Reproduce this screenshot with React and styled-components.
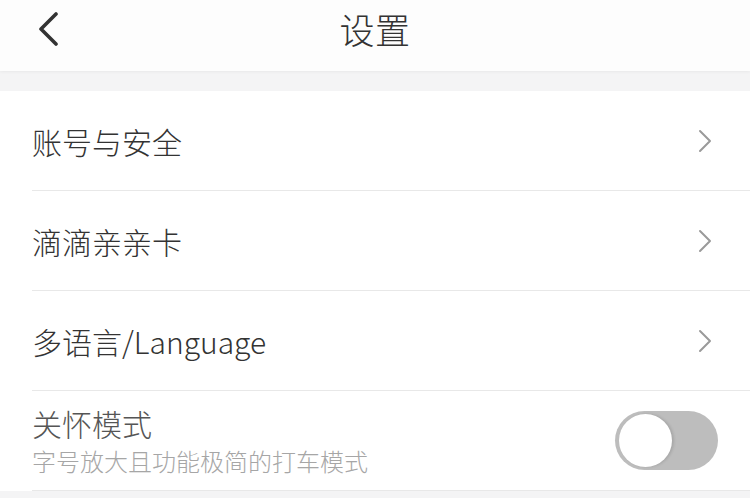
import React, { useState } from 'react';
import styled, { createGlobalStyle } from 'styled-components';

const GlobalStyle = createGlobalStyle`
  html, body {
    margin: 0;
    padding: 0;
    background: #f4f4f5;
  }
  body {
    font-family: "Noto Sans CJK SC", "Noto Sans", sans-serif;
    color: #333;
  }
`;

const items = [
  { id: 'account', title: '账号与安全' },
  { id: 'card', title: '滴滴亲亲卡' },
  { id: 'lang', title: '多语言/Language' },
];

function App() {
  const [care, setCare] = useState(false);

  return (
    <Page>
      <GlobalStyle />
      <Header>
        <BackButton aria-label="back">
          <svg width="22" height="34" viewBox="0 0 22 34">
            <path d="M19 2 L4 17 L19 32" fill="none" stroke="#333" strokeWidth="3.6" strokeLinecap="round" strokeLinejoin="round" />
          </svg>
        </BackButton>
        <Title>设置</Title>
      </Header>

      <List>
        {items.map((item) => (
          <Row key={item.id}>
            <RowLabel>{item.title}</RowLabel>
            <svg width="14" height="24" viewBox="0 0 14 24">
              <path d="M2 2 L12 12 L2 22" fill="none" stroke="#9a9a9a" strokeWidth="2" strokeLinecap="round" strokeLinejoin="round" />
            </svg>
          </Row>
        ))}
        <Row>
          <TextStack>
            <RowLabel muted>关怀模式</RowLabel>
            <SubLabel>字号放大且功能极简的打车模式</SubLabel>
          </TextStack>
          <Switch on={care} onClick={() => setCare(!care)}>
            <Knob on={care} />
          </Switch>
        </Row>
      </List>
    </Page>
  );
}

export default App;

const Page = styled.div`
  width: 750px;
  min-height: 498px;
  background: #f4f4f5;
`;

const Header = styled.div`
  position: relative;
  height: 71px;
  background: #fdfdfd;
  display: flex;
  align-items: center;
  justify-content: center;
  box-shadow: 0 1px 3px rgba(0, 0, 0, 0.05);
`;

const BackButton = styled.div`
  position: absolute;
  left: 37px;
  top: 12px;
  display: flex;
`;

const Title = styled.div`
  font-size: 35px;
  font-weight: 300;
  color: #333;
  margin-top: -14px;
  letter-spacing: 0.5px;
`;

const List = styled.div`
  margin-top: 20px;
  background: #fff;
  padding-left: 32px;
`;

const Row = styled.div`
  height: 99px;
  border-bottom: 1px solid #e8e8e8;
  display: flex;
  align-items: center;
  justify-content: space-between;
  padding-right: 38px;

  &:last-child {
    padding-right: 32px;
  }
`;

const RowLabel = styled.div`
  font-size: 30px;
  font-weight: 300;
  color: ${(p) => (p.muted ? '#555' : '#333')};
  line-height: 36px;
`;

const TextStack = styled.div`
  display: flex;
  flex-direction: column;
  gap: 4px;
`;

const SubLabel = styled.div`
  font-size: 24px;
  font-weight: 300;
  color: #a6a6a6;
  line-height: 32px;
`;

const Switch = styled.div`
  width: 103px;
  height: 59px;
  border-radius: 30px;
  background: ${(p) => (p.on ? '#fc9153' : '#bdbdbd')};
  display: flex;
  align-items: center;
  padding: 0 4px;
  box-sizing: border-box;
  justify-content: ${(p) => (p.on ? 'flex-end' : 'flex-start')};
  cursor: pointer;
`;

const Knob = styled.div`
  width: 53px;
  height: 53px;
  border-radius: 50%;
  background: #fff;
  box-shadow: 2px 0 3px rgba(0, 0, 0, 0.12);
`;
